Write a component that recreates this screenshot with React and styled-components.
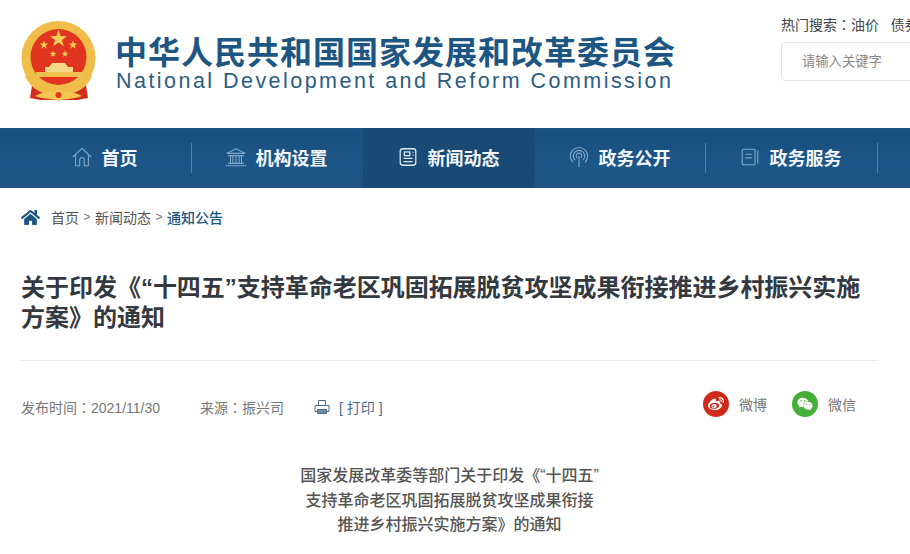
import React from "react";
import styled, { createGlobalStyle } from "styled-components";
import { FaHome, FaWeibo, FaWeixin } from "react-icons/fa";

const FONT = `"Liberation Sans", "Noto Sans CJK SC", sans-serif`;
// the centred full-width colon in the meta lines comes from the TC cut
const FONT_TC = `"Liberation Sans", "Noto Sans CJK TC", sans-serif`;

const GlobalStyle = createGlobalStyle`
  html, body {
    margin: 0;
    padding: 0;
    background: #fff;
    overflow: hidden;
  }
  body {
    font-family: ${FONT};
  }
`;

const Page = styled.div`
  width: 910px;
  height: 554px;
  overflow: hidden;
`;

const Header = styled.header`
  height: 128px;
  display: flex;
  justify-content: space-between;
  padding-left: 21px;
  box-sizing: border-box;
`;

const Brand = styled.div`
  display: flex;
  align-items: flex-start;
  padding-top: 21px;
  gap: 18px;
`;

const BrandText = styled.div`
  padding-top: 14px;
  color: #1d5583;
`;

const BrandName = styled.div`
  font-size: 32px;
  font-weight: 700;
  line-height: 36px;
  letter-spacing: 1px;
  white-space: nowrap;
`;

const BrandEnglish = styled.div`
  margin-top: -2px;
  font-size: 21.5px;
  line-height: 24px;
  letter-spacing: 2.46px;
  padding-left: 1px;
  color: #2b5d83;
  white-space: nowrap;
`;

const SearchArea = styled.div`
  width: 129px;
  padding-top: 16px;
  flex-shrink: 0;
`;

const HotWords = styled.div`
  font-family: ${FONT_TC};
  font-size: 14px;
  line-height: 18px;
  color: #444;
  white-space: nowrap;
`;

const SearchBox = styled.div`
  margin-top: 8px;
  width: 160px;
  height: 39px;
  border: 1px solid #e4e4e4;
  border-radius: 4px;
  box-sizing: border-box;
  padding: 0 0 2px 20px;
  display: flex;
  align-items: center;
  font-size: 13.3px;
  color: #888;
`;

const Nav = styled.nav`
  height: 60px;
  padding-left: 19px;
  display: flex;
  background: linear-gradient(#1a5488 0, #18507f 14%, #1c5688 60%, #1f5484 100%);
`;

const NavItem = styled.div`
  width: ${(p) => p.$width}px;
  height: 60px;
  padding: 0 2px 2px 0;
  display: flex;
  align-items: center;
  justify-content: center;
  gap: 9px;
  box-sizing: border-box;
  position: relative;
  color: #f2f6fa;
  font-size: 18px;
  font-weight: 700;
  background: ${(p) => (p.$active ? "#194975" : "transparent")};

  &::after {
    content: "";
    display: ${(p) => (p.$divider ? "block" : "none")};
    position: absolute;
    right: -1px;
    top: 15px;
    height: 30px;
    width: 1px;
    background: #5583a8;
  }

  svg {
    width: 22px;
    height: 22px;
    flex-shrink: 0;
    color: ${(p) => (p.$active ? "#dce8f2" : "#7fa8c9")};
  }
`;

const Content = styled.main`
  padding: 0 32px 0 21px;
`;

const Crumbs = styled.div`
  height: 58px;
  display: flex;
  align-items: center;
  font-size: 14px;
  color: #555;
  white-space: nowrap;

  svg {
    width: 19px;
    height: 19px;
    color: #1d5583;
    margin-right: 11px;
  }
`;

const CrumbSep = styled.span`
  margin: 0 4.5px;
  font-size: 12px;
  color: #777;
`;

const CrumbCurrent = styled.span`
  color: #1d5583;
  font-weight: 500;
`;

const Title = styled.h1`
  margin: 27px 0 0 -1px;
  font-size: 24px;
  line-height: 30px;
  letter-spacing: -0.02px;
  font-weight: 700;
  color: #33393f;
  padding-bottom: 27px;
  padding-left: 1px;
  border-bottom: 1px solid #ededed;
`;

const MetaRow = styled.div`
  display: flex;
  align-items: center;
  justify-content: space-between;
  height: 88px;
  margin-top: 2px;
  padding-right: 22px;
`;

const MetaLeft = styled.div`
  display: flex;
  align-items: center;
  font-family: ${FONT_TC};
  font-size: 14px;
  color: #777;
  white-space: nowrap;
`;

const MetaText = styled.span`
  margin-right: ${(p) => p.$gap}px;
`;

const PrintLink = styled.span`
  display: flex;
  align-items: center;
  gap: 9px;
  color: #4a6a88;

  svg {
    width: 16px;
    height: 16px;
  }
`;

const Shares = styled.div`
  display: flex;
  align-items: center;
  gap: 25px;
  margin-top: -6px;
`;

const Share = styled.div`
  display: flex;
  align-items: center;
  gap: 10px;
  font-size: 14px;
  color: #777;
`;

const ShareBadge = styled.span`
  width: 26px;
  height: 26px;
  border-radius: 50%;
  background: ${(p) => p.$color};
  color: #fff;
  display: flex;
  align-items: center;
  justify-content: center;

  svg {
    width: 16px;
    height: 16px;
  }
`;

const Subtitle = styled.div`
  margin-top: 13px;
  text-align: center;
  font-size: 16px;
  line-height: 24.5px;
  font-weight: 500;
  color: #555;
`;

const starPoints = (cx, cy, r) => {
  const pts = [];
  for (let i = 0; i < 10; i++) {
    const rad = i % 2 === 0 ? r : r * 0.4;
    const a = (Math.PI / 5) * i - Math.PI / 2;
    pts.push(`${(cx + rad * Math.cos(a)).toFixed(2)},${(cy + rad * Math.sin(a)).toFixed(2)}`);
  }
  return pts.join(" ");
};

const Emblem = () => (
  <svg width="76" height="81" viewBox="0 0 76 81">
    <path d="M12 58 L9 77 L20 79 L56 79 L67 77 L64 58 Z" fill="#cf2c1e" />
    <circle cx="37.5" cy="37" r="37" fill="#efbd48" />
    <circle cx="37.5" cy="36" r="28" fill="#e2351f" />
    <polygon points={starPoints(37.5, 18, 9)} fill="#f6cf55" />
    <polygon points={starPoints(23, 24, 4.5)} fill="#f6cf55" />
    <polygon points={starPoints(52, 24, 4.5)} fill="#f6cf55" />
    <polygon points={starPoints(32, 33, 3.5)} fill="#f6cf55" />
    <polygon points={starPoints(44, 33, 3.5)} fill="#f6cf55" />
    <path d="M28 46 L31 42 L44 42 L47 46 L52 46 L52 52 L24 52 L24 46 Z" fill="#f3d987" />
    <rect x="15" y="51" width="46" height="5" fill="#f0c14f" />
    <path d="M9 52 C16 66 28 68 37.5 68 C47 68 59 66 66 52 L71 55 C64 71 50 74 37.5 74 C25 74 11 71 4 55 Z" fill="#efbd48" />
    <path d="M14 75 C24 69 32 73 37.5 68 C43 73 51 69 61 75 C50 79 44 77 37.5 80 C31 77 25 79 14 75 Z" fill="#f3c650" />
    <circle cx="37.5" cy="74" r="3" fill="#e2351f" />
  </svg>
);

const HomeOutline = () => (
  <svg viewBox="0 0 24 24" fill="none" stroke="currentColor" strokeWidth="1.2">
    <path d="M2 12 L12 2.5 L22 12" />
    <path d="M5 10 V21.5 H9.5 V15 A2.5 2.5 0 0 1 14.5 15 V21.5 H19 V10" />
  </svg>
);

const Institution = () => (
  <svg viewBox="0 0 24 24" fill="none" stroke="currentColor" strokeWidth="1.2">
    <path d="M2 8 L12 3 L22 8 Z" />
    <path d="M1 21.5 H23 M3.5 19 H20.5 M3.5 10.5 H20.5" />
    <path d="M6 11 V18.5 M8.5 11 V18.5 M12 11 V18.5 M15.5 11 V18.5 M18 11 V18.5" />
  </svg>
);

const Paper = () => (
  <svg viewBox="0 0 24 24" fill="none" stroke="currentColor" strokeWidth="1.4">
    <rect x="3.5" y="3" width="17" height="18" rx="3" />
    <rect x="8" y="6.5" width="6" height="4" />
    <path d="M17 7 H18 M17 10 H18 M7 13.5 H17 M7 17 H17" />
  </svg>
);

const Signal = () => (
  <svg viewBox="0 0 24 24" fill="none" stroke="currentColor" strokeWidth="1.2">
    <path d="M5.5 18 A9.5 9.5 0 1 1 18.5 18" />
    <path d="M7.8 15.5 A6.2 6.2 0 1 1 16.2 15.5" />
    <path d="M10 13 A3 3 0 1 1 14 13" />
    <path d="M12 11 V23" />
  </svg>
);

const Booklet = () => (
  <svg viewBox="0 0 24 24" fill="none" stroke="currentColor" strokeWidth="1.2">
    <rect x="3.5" y="3.5" width="14" height="17" rx="1.5" />
    <path d="M7 9 H14 M7 13 H14 M20.5 5 V19" />
  </svg>
);

const Printer = () => (
  <svg viewBox="0 0 16 16" fill="none" stroke="#4a6a88" strokeWidth="1">
    <path d="M4.5 6 V1.5 H11.5 V6" />
    <path d="M3.5 12.5 H1 V6.5 H15 V12.5 H12.5" />
    <path d="M3.5 10.5 H12.5 V14.5 H3.5 Z" fill="#6f8ba6" />
  </svg>
);

const navItems = [
  { label: "首页", icon: <HomeOutline />, width: 172, divider: true },
  { label: "机构设置", icon: <Institution />, width: 172, divider: true },
  { label: "新闻动态", icon: <Paper />, width: 172, active: true },
  { label: "政务公开", icon: <Signal />, width: 170, divider: true },
  { label: "政务服务", icon: <Booklet />, width: 172, divider: true },
];

const App = () => {
  return (
    <Page>
      <GlobalStyle />
      <Header>
        <Brand>
          <Emblem />
          <BrandText>
            <BrandName>中华人民共和国国家发展和改革委员会</BrandName>
            <BrandEnglish>National Development and Reform Commission</BrandEnglish>
          </BrandText>
        </Brand>
        <SearchArea>
          <HotWords>热门搜索：油价&nbsp;&nbsp;&nbsp;债券</HotWords>
          <SearchBox>请输入关键字</SearchBox>
        </SearchArea>
      </Header>
      <Nav>
        {navItems.map((item) => (
          <NavItem key={item.label} $width={item.width} $active={item.active} $divider={item.divider}>
            {item.icon}
            {item.label}
          </NavItem>
        ))}
      </Nav>
      <Content>
        <Crumbs>
          <FaHome />
          首页
          <CrumbSep>&gt;</CrumbSep>
          新闻动态
          <CrumbSep>&gt;</CrumbSep>
          <CrumbCurrent>通知公告</CrumbCurrent>
        </Crumbs>
        <Title>关于印发《“十四五”支持革命老区巩固拓展脱贫攻坚成果衔接推进乡村振兴实施方案》的通知</Title>
        <MetaRow>
          <MetaLeft>
            <MetaText $gap={40}>发布时间：2021/11/30</MetaText>
            <MetaText $gap={30}>来源：振兴司</MetaText>
            <PrintLink>
              <Printer />
              [ 打印 ]
            </PrintLink>
          </MetaLeft>
          <Shares>
            <Share>
              <ShareBadge $color="#cf2a1c">
                <FaWeibo />
              </ShareBadge>
              微博
            </Share>
            <Share>
              <ShareBadge $color="#44b035">
                <FaWeixin />
              </ShareBadge>
              微信
            </Share>
          </Shares>
        </MetaRow>
        <Subtitle>
          国家发展改革委等部门关于印发《“十四五”
          <br />
          支持革命老区巩固拓展脱贫攻坚成果衔接
          <br />
          推进乡村振兴实施方案》的通知
        </Subtitle>
      </Content>
    </Page>
  );
};

export default App;
